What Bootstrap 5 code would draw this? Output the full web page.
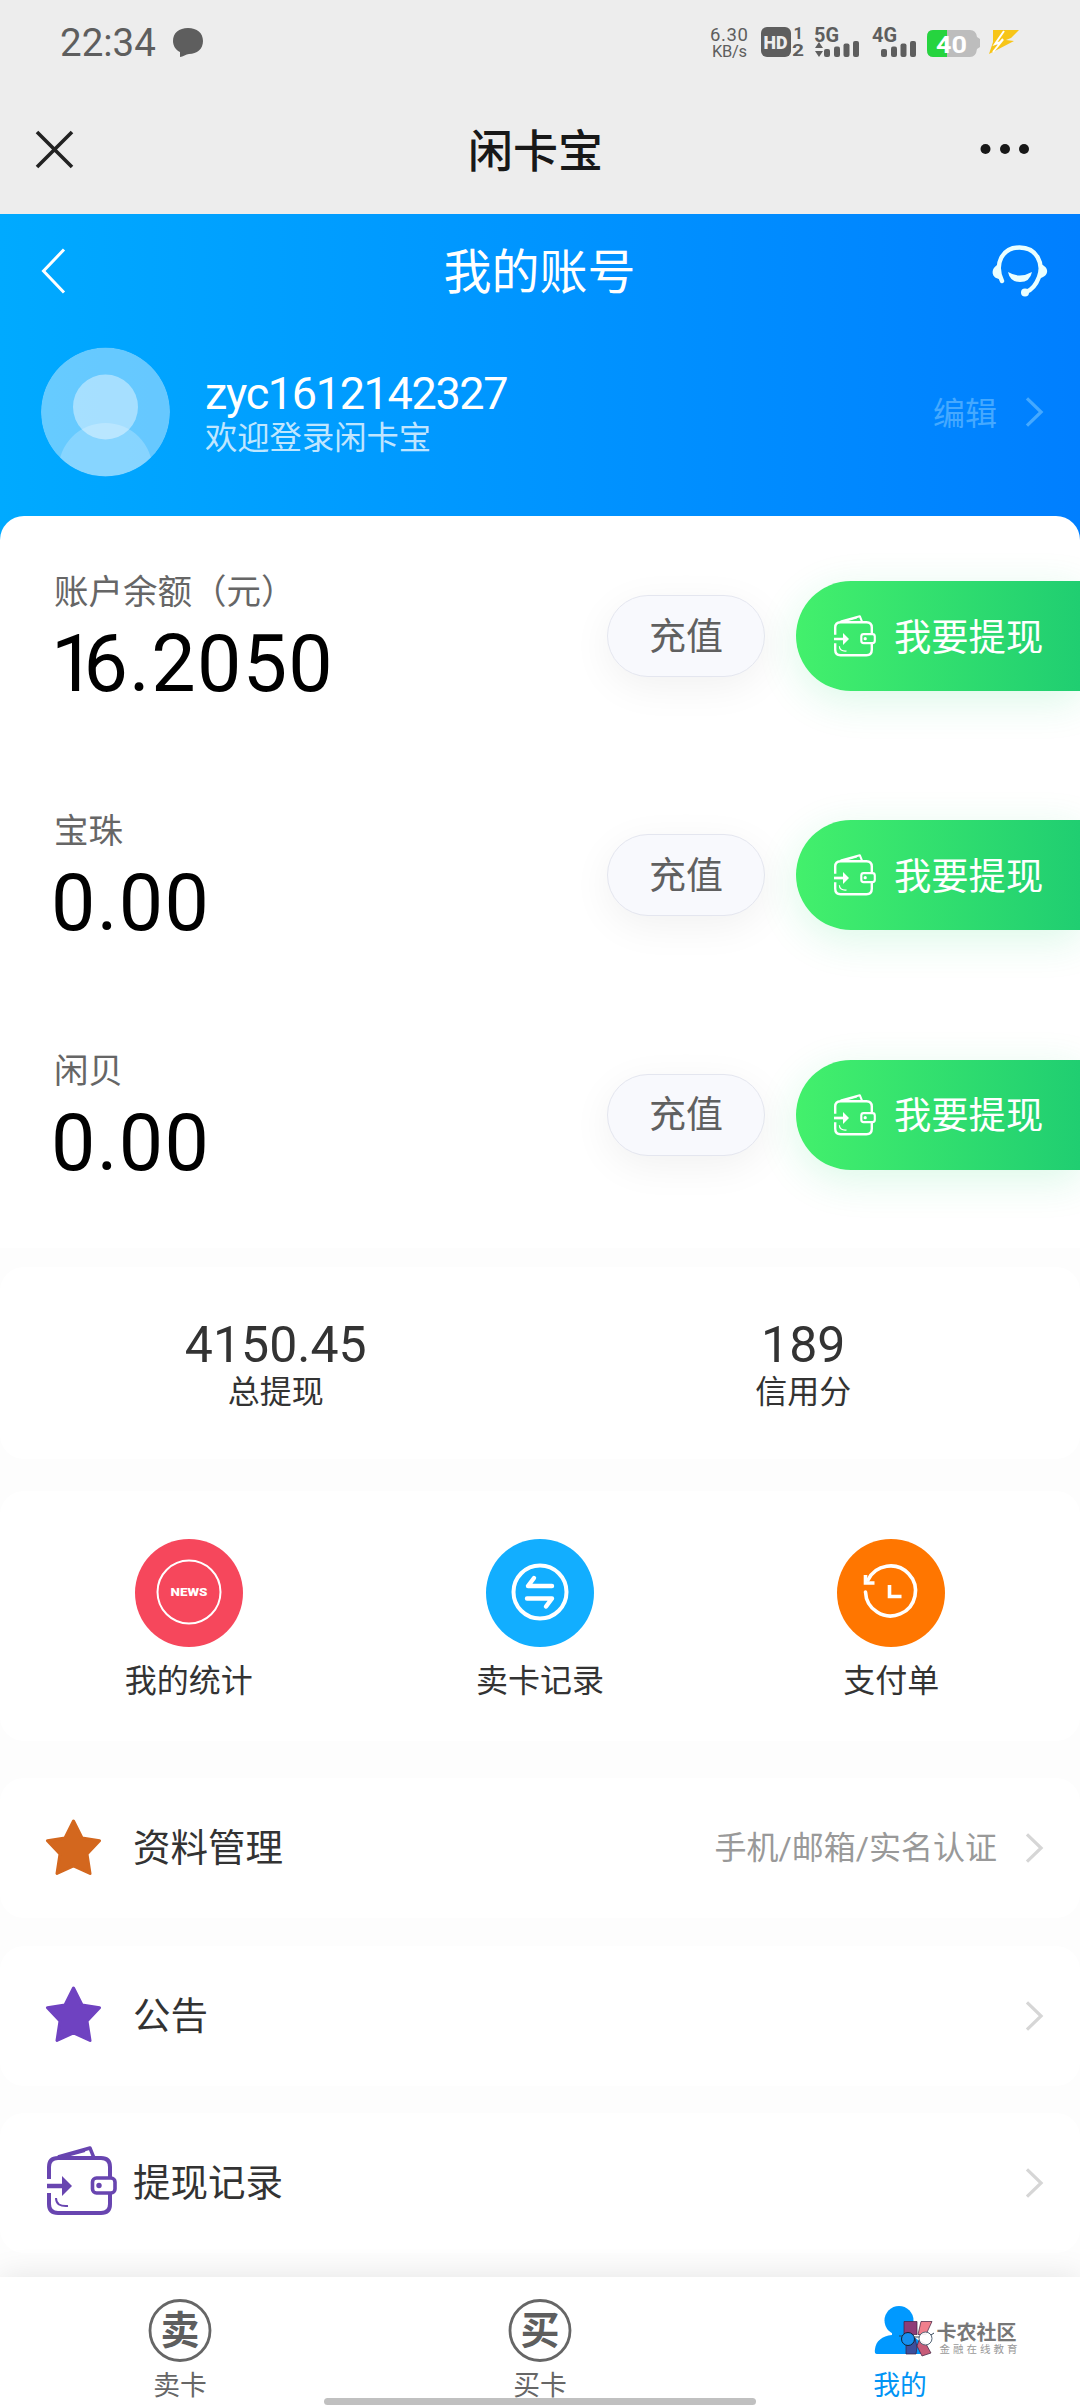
<!DOCTYPE html>
<html lang="zh-CN">
<head>
<meta charset="utf-8">
<meta name="viewport" content="width=device-width, initial-scale=1">
<title>闲卡宝</title>
<link rel="stylesheet" href="https://cdn.jsdelivr.net/npm/bootstrap@5.3.0/dist/css/bootstrap.min.css">
<style>
body{font-family:Roboto,"Noto Sans CJK SC",sans-serif;background:#fdfdfd;color:#333;width:1080px;height:2408px;overflow:hidden}
svg{display:block;flex:none}
svg text{font-family:Roboto,"Noto Sans CJK SC",sans-serif}
.statusbar{height:84px;background:#ededed;color:#5e5e5e;padding:0 51px 0 60px}
.clock{font-size:38.5px;line-height:38px;padding-top:2px}
.titlebar{height:130px;background:#ededed;padding:0 50px 0 35px}
.apptitle{font-size:45px;line-height:60px;font-weight:500;color:#181818;padding-top:7px}
.hero{height:302px}
.herowrap{background:linear-gradient(90deg,#00aaff,#007fff)}
.heronav{height:114px;padding:0 32px 0 41px}
.herotitle{font-size:48px;line-height:60px;color:#fff;padding-top:4px}
.profile{height:168px;padding:0 36px 0 41px;margin-bottom:20px}
.usertext{margin-left:35px;padding-top:6px}
.uname{font-size:45px;line-height:46px;letter-spacing:-1.35px;color:#fff}
.welcome{font-size:32.3px;line-height:42px;color:rgba(255,255,255,.75)}
.editlink{font-size:32px;line-height:40px;color:#45a9ff}
.panel{background:#fff;border-radius:24px}
.balances{height:732px;overflow:hidden;padding-top:17px;border-radius:24px 24px 0 0}
.balrow{height:239.4px;padding-left:54px}
.balinfo{padding-top:37px}
.ballabel{font-size:34.5px;line-height:44px;color:#666}
.balnum{font-size:79px;line-height:92px;color:#000;letter-spacing:1.3px;margin:4px 0 0 -3px}
.narrow-one{letter-spacing:-12px}
.balactions{gap:31px}
.topup{width:158px;height:82px;border:1px solid #e4e6ef;background:#f8f9fd;color:#606060;font-size:37px;line-height:48px;border-radius:41px;box-shadow:0 10px 40px rgba(0,0,0,.06)}
.withdraw{width:284px;height:110px;border-radius:55px 0 0 55px;background:linear-gradient(90deg,#43f06c,#20ce71);color:#fff;font-size:37.3px;line-height:48px;padding-left:38px;gap:18px;box-shadow:0 10px 40px rgba(32,220,110,.16)}
.btntext{padding-top:3px}
.stats{height:192px;margin-top:19px;padding:52px 13px 0 12px}
.statnum{font-size:50px;line-height:52px}
.statlabel{font-size:32px;line-height:42px}
.shortcuts{height:250px;margin-top:32px;padding:48px 13px 0}
.shortlabel{font-size:32px;line-height:42px;margin-top:13px}
.menurow{height:140px;padding:0 36px 0 45px}
.menulist{margin-top:37px;gap:27.5px}
.menuicon{width:88px;padding-bottom:2px}
.menutext{font-size:37.5px;line-height:48px}
.menuvalue{font-size:32px;line-height:42px;color:#999;margin-right:28px}
.tabs{height:131px;left:0;top:2277px;background:#fff;box-shadow:0 0 30px rgba(0,0,0,.1);padding:20px 0 0}
.tablabel{font-size:26.8px;line-height:34px;color:#666;margin-top:6px}
.tablabel.current{color:#0094f5}
.homebar{left:324px;top:2398px;width:432px;height:7px;background:#c0c0c0}
.stamp{left:898px;top:2318px}
</style>
</head>
<body>
<svg width="0" height="0" class="position-absolute">
<symbol id="wallet" viewBox="0 0 70 70"><g fill="none" stroke="currentColor" stroke-width="4" stroke-linejoin="round">
<path d="M2 33V21q0-9 9-9h43q9 0 9 9v10M2 47v11q0 9 9 9h43q9 0 9-9V48"/>
<path d="M11 11L43 2l4 10" stroke-width="3.4"/><path d="M16 11l22-6" stroke-width="2"/>
<path d="M0 40h19" stroke-width="4.5"/><path d="M15 30l10 10-10 10z" fill="currentColor" stroke="none"/>
<rect x="45.500" y="32" width="22.500" height="15" rx="4" stroke-width="3.6"/>
<path d="M9 52q0 9 12 8" stroke-width="2"/></g><circle cx="52" cy="39.500" r="2.700" fill="currentColor"/></symbol>
<symbol id="star" viewBox="0 0 57 57"><path d="M28.500 2l8.500 17 17.500 2.700-12.500 13.300 3 19.500-16.500-7.500L12 54.500 15 35 2.500 21.700 20 19z" fill="currentColor" stroke="currentColor" stroke-width="3" stroke-linejoin="round"/></symbol>
<symbol id="next" viewBox="0 0 20 34"><path d="M2 2.500L17 17 2 31.500" fill="none" stroke="currentColor" stroke-width="3.4"/></symbol>
</svg>

<header class="statusbar d-flex align-items-center justify-content-between">
  <div class="d-flex align-items-center">
    <span class="clock">22:34</span>
    <svg class="ms-3" width="32" height="32" viewBox="0 0 32 32"><path d="M16 2c9 0 15 5 15 13s-6 13-14 13c-3 0-6 3-9 3v-5C4 24 1 20 1 15 1 7 7 2 16 2z" fill="#5e5e5e"/></svg>
  </div>
  <svg width="320" height="40" viewBox="710 22 320 40" fill="#5e5e5e">
    <text x="711" y="41" font-size="18.500" textLength="38">6.30</text><text x="713" y="56.500" font-size="16.500" textLength="35">KB/s</text>
    <rect x="762" y="27" width="30" height="30" rx="6"/><text x="764.500" y="49" font-size="18.500" font-weight="900" textLength="24" lengthAdjust="spacingAndGlyphs" fill="#ededed">HD</text>
    <text x="794.500" y="39" font-size="16.500" font-weight="700">1</text><text x="793" y="56" font-size="16.500" font-weight="700" textLength="12" lengthAdjust="spacingAndGlyphs">2</text>
    <text x="815" y="41.500" font-size="20" font-weight="700" textLength="25" lengthAdjust="spacingAndGlyphs">5G</text>
    <path d="M816 48l4-6 4 6zM816 51h8l-4 6z"/>
    <rect x="825" y="49" width="6" height="8" rx="2"/><rect x="835" y="46.500" width="6" height="10.500" rx="2"/><rect x="844.500" y="43.500" width="6" height="13.500" rx="2"/><rect x="854" y="41" width="6" height="16" rx="2"/>
    <text x="873" y="41.500" font-size="20" font-weight="700" textLength="25" lengthAdjust="spacingAndGlyphs">4G</text>
    <rect x="882" y="49" width="6" height="8" rx="2"/><rect x="892" y="46.500" width="6" height="10.500" rx="2"/><rect x="901.500" y="43.500" width="6" height="13.500" rx="2"/><rect x="911" y="41" width="6" height="16" rx="2"/>
    <path d="M934 30h37q6 0 7 7l3 2v8l-3 2q-1 8-7 8h-37q-6 0-6-7V37q0-7 6-7z" fill="#bdbdbd"/>
    <path d="M948 30h-14q-6 0-6 7v13q0 7 6 7h14z" fill="#26d43f"/>
    <text x="937" y="52.500" font-size="24" font-weight="700" textLength="31" lengthAdjust="spacingAndGlyphs" fill="#fff">40</text>
    <path d="M994 30h26l-8 8-5 2 8 1-25 13 4-12z" fill="#f7c519"/><path d="M1005 31l-9 13 6-2-8 10M1004 39l-5 6" stroke="#fff" stroke-width="2" fill="none"/>
  </svg>
</header>

<nav class="titlebar d-flex align-items-center justify-content-between">
  <svg width="56" height="40" viewBox="0 0 56 40"><path d="M2 3l35 35M37 3L2 38" stroke="#222" stroke-width="3.600"/></svg>
  <div class="apptitle">闲卡宝</div>
  <svg width="50" height="12" viewBox="0 0 50 12" fill="#181818"><circle cx="5.500" cy="6" r="5"/><circle cx="25" cy="6" r="5"/><circle cx="44" cy="6" r="5"/></svg>
</nav>

<div class="herowrap">
  <section class="hero">
    <div class="heronav d-flex align-items-center justify-content-between">
      <svg width="46" height="46" viewBox="0 0 46 46"><path d="M23 1.500L2.500 23 23 44.500" fill="none" stroke="#fff" stroke-width="3"/></svg>
      <div class="herotitle">我的账号</div>
      <svg width="56" height="54" viewBox="0 0 56 54" fill="none" stroke="#eaffff"><path d="M10 37C2 20 10 3.500 27.500 3.500S52 20 47 33C44 41 40 46 34 48" stroke-width="4.400" stroke-linecap="round"/><path d="M7 20C-2 24-1 34 7 35zM48 20c10 3 9 12 0 14z" fill="#eaffff" stroke="none"/><circle cx="33" cy="48.500" r="4" fill="#eaffff" stroke="none"/><path d="M16 28q11.500 7 24 0-2 10-12 10T16 28z" fill="#eaffff" stroke="none"/></svg>
    </div>
    <div class="profile d-flex align-items-center">
      <svg width="129" height="130" viewBox="0 0 129 130"><defs><clipPath id="face"><circle cx="64.500" cy="65" r="64.500"/></clipPath></defs><g fill="#fff" clip-path="url(#face)"><circle cx="64.500" cy="65" r="64.500" opacity=".4"/><circle cx="64.500" cy="60" r="32.500" opacity=".42"/><circle cx="64.500" cy="123" r="47" opacity=".22"/></g></svg>
      <div class="usertext flex-grow-1">
        <div class="uname">zyc1612142327</div>
        <div class="welcome">欢迎登录闲卡宝</div>
      </div>
      <a class="editlink d-flex align-items-center text-decoration-none" href="#"><span class="me-4 pt-1">编辑</span><svg class="ms-1" width="19" height="32"><use href="#next"/></svg></a>
    </div>
  </section>
  <section class="panel balances">
    <div class="balrow d-flex align-items-start">
      <div class="balinfo flex-grow-1"><div class="ballabel">账户余额（元）</div><div class="balnum"><span class="narrow-one">1</span>6.2050</div></div>
      <div class="balactions d-flex align-items-center pt-5"><button class="topup btn p-0"><span class="btntext d-block">充值</span></button><div class="withdraw d-flex align-items-center"><svg width="42" height="42"><use href="#wallet"/></svg><span class="btntext">我要提现</span></div></div>
    </div>
    <div class="balrow d-flex align-items-start">
      <div class="balinfo flex-grow-1"><div class="ballabel">宝珠</div><div class="balnum">0.00</div></div>
      <div class="balactions d-flex align-items-center pt-5"><button class="topup btn p-0"><span class="btntext d-block">充值</span></button><div class="withdraw d-flex align-items-center"><svg width="42" height="42"><use href="#wallet"/></svg><span class="btntext">我要提现</span></div></div>
    </div>
    <div class="balrow d-flex align-items-start">
      <div class="balinfo flex-grow-1"><div class="ballabel">闲贝</div><div class="balnum">0.00</div></div>
      <div class="balactions d-flex align-items-center pt-5"><button class="topup btn p-0"><span class="btntext d-block">充值</span></button><div class="withdraw d-flex align-items-center"><svg width="42" height="42"><use href="#wallet"/></svg><span class="btntext">我要提现</span></div></div>
    </div>
  </section>
</div>

<section class="panel stats d-flex text-center">
  <div class="w-50"><div class="statnum">4150.45</div><div class="statlabel">总提现</div></div>
  <div class="w-50"><div class="statnum">189</div><div class="statlabel">信用分</div></div>
</section>

<section class="panel shortcuts">
  <div class="row g-0 text-center">
    <div class="col-4"><svg class="mx-auto" width="108" height="108" viewBox="0 0 108 108"><circle cx="54" cy="54" r="54" fill="#f6475c"/><circle cx="54" cy="53" r="31.500" fill="none" stroke="#fff" stroke-width="2"/><text x="54" y="57" text-anchor="middle" font-size="11.500" font-weight="900" textLength="37" lengthAdjust="spacingAndGlyphs" fill="#fff">NEWS</text></svg><div class="shortlabel">我的统计</div></div>
    <div class="col-4"><svg class="mx-auto" width="108" height="108" viewBox="0 0 108 108" fill="none" stroke="#fff" stroke-width="4"><circle cx="54" cy="54" r="54" fill="#12aeff" stroke="none"/><circle cx="54" cy="53" r="26.500"/><path d="M66 47H42l6-8M41 59.500h25l-6 8" stroke-linecap="round" stroke-linejoin="round" stroke-width="4.400"/></svg><div class="shortlabel">卖卡记录</div></div>
    <div class="col-4"><svg class="mx-auto" width="108" height="108" viewBox="0 0 108 108" fill="none" stroke="#fff" stroke-width="3.600"><circle cx="54" cy="54" r="54" fill="#ff7600" stroke="none"/><path d="M28.500 53A25 25 0 1 0 31 41" stroke-linecap="round"/><path d="M28.500 36v8h9M52.500 46v11.500h12"/></svg><div class="shortlabel">支付单</div></div>
  </div>
</section>

<section class="menulist d-flex flex-column">
  <div class="panel menurow d-flex align-items-center"><div class="menuicon"><svg width="57" height="57" color="#d3671e"><use href="#star"/></svg></div><span class="menutext flex-grow-1">资料管理</span><span class="menuvalue">手机/邮箱/实名认证</span><svg width="19" height="32" color="#d6d6d6"><use href="#next"/></svg></div>
  <div class="panel menurow d-flex align-items-center"><div class="menuicon"><svg width="57" height="57" color="#6f42c1"><use href="#star"/></svg></div><span class="menutext flex-grow-1">公告</span><svg width="19" height="32" color="#d6d6d6"><use href="#next"/></svg></div>
  <div class="panel menurow d-flex align-items-center"><div class="menuicon pb-1"><svg width="73" height="70" viewBox="-2 0 73 70" color="#6845b0"><use href="#wallet" width="70" height="70"/></svg></div><span class="menutext flex-grow-1">提现记录</span><svg width="19" height="32" color="#d6d6d6"><use href="#next"/></svg></div>
</section>

<nav class="tabs position-absolute w-100">
  <div class="row g-0 text-center">
    <div class="col-4"><svg class="mx-auto" width="64" height="66" viewBox="0 0 64 66"><circle cx="32" cy="33.500" r="30" fill="none" stroke="#666" stroke-width="2.800"/><text x="32" y="47" font-size="39" font-weight="700" text-anchor="middle" fill="#5e5e5e">卖</text></svg><div class="tablabel">卖卡</div></div>
    <div class="col-4"><svg class="mx-auto" width="64" height="66" viewBox="0 0 64 66"><circle cx="32" cy="33.500" r="30" fill="none" stroke="#666" stroke-width="2.800"/><text x="32" y="47" font-size="39" font-weight="700" text-anchor="middle" fill="#5e5e5e">买</text></svg><div class="tablabel">买卡</div></div>
    <div class="col-4"><svg class="mx-auto" width="64" height="66" viewBox="0 0 64 66" fill="#0099ff"><ellipse cx="31" cy="23.500" rx="14.500" ry="14.500"/><path d="M24 30h15v8c11 2 16 8 17 19H9q-3 0-2-5c1-8 7-13 17-14z"/></svg><div class="tablabel current">我的</div></div>
  </div>
</nav>
<svg class="stamp position-absolute" width="122" height="42" viewBox="899 2318 122 42">
  <g stroke="#402040" stroke-opacity=".7"><path d="M905 2321.500h13v13h-13z" fill="#8f3c78"/><path d="M922 2321.500h11l-6 13h-8z" fill="#f07f8c"/><path d="M907 2344l9-6 2 9-1 7h-10z" fill="#3c4f9c"/><path d="M920 2340l7 4 5 9-9 3-5-10z" fill="#c75b78"/></g>
  <circle cx="909" cy="2339" r="6.500" fill="#1690f0" stroke="#123"/><circle cx="926.500" cy="2338.500" r="6.500" fill="#fff" fill-opacity=".9" stroke="#567"/><path d="M900 2336h3M915 2337h5M932 2335l3-2" stroke="#345"/>
  <text x="937.500" y="2339.500" font-size="20" font-weight="700" textLength="80" fill="#777">卡农社区</text>
  <text x="940.500" y="2352.500" font-size="10.500" textLength="78" fill="#999">金融在线教育</text>
</svg>
<div class="homebar position-absolute rounded-pill"></div>
<script src="https://cdn.jsdelivr.net/npm/bootstrap@5.3.0/dist/js/bootstrap.bundle.min.js"></script>
</body>
</html>
